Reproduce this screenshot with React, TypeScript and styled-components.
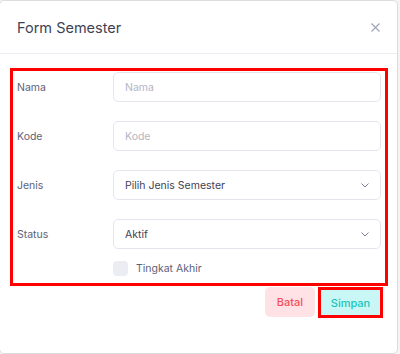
import React from 'react';
import styled, { createGlobalStyle } from 'styled-components';

const GlobalStyle = createGlobalStyle`
  html, body {
    margin: 0;
    padding: 0;
    background: #f4f4f4;
    font-family: Inter, 'Noto Sans', sans-serif;
  }
  * { box-sizing: border-box; }
`;

const Modal = styled.div`
  width: 399px;
  height: 354px;
  margin-left: -1px;
  background: #fff;
  border: 1px solid #dcdcdc;
  border-radius: 5px;
  display: flex;
  flex-direction: column;
`;

const Header = styled.div`
  height: 53px;
  flex-shrink: 0;
  display: flex;
  align-items: center;
  justify-content: space-between;
  padding: 0 16px 0 17px;
  border-bottom: 1px solid #ebedf3;
`;

const Title = styled.h3`
  margin: 0;
  font-size: 14.5px;
  font-weight: 400;
  color: #3f4254;
`;

const CloseButton = styled.button`
  border: none;
  background: none;
  padding: 0;
  width: 12px;
  height: 12px;
  display: flex;
  align-items: center;
  justify-content: center;
  cursor: pointer;
`;

const Body = styled.div`
  padding: 14px 9px 0 10px;
`;

const Highlight = styled.div`
  border: 3px solid #ff0000;
  padding: 1px 4px 7px 4px;
`;

const FieldRow = styled.div`
  display: grid;
  grid-template-columns: 96px 1fr;
  align-items: center;
  margin-bottom: 19px;
`;

const Label = styled.label`
  font-size: 10.5px;
  color: #5e6278;
`;

const Input = styled.input`
  height: 30px;
  width: 100%;
  border: 1px solid #e4e6ef;
  border-radius: 5px;
  padding: 0 11px;
  font-family: inherit;
  font-size: 10.5px;
  color: #3f4254;
  outline: none;
  &::placeholder {
    color: #b5b5c3;
  }
`;

const Select = styled.div`
  height: 30px;
  width: 100%;
  border: 1px solid #e4e6ef;
  border-radius: 5px;
  padding: 0 11px;
  display: flex;
  align-items: center;
  justify-content: space-between;
  font-size: 10.5px;
  color: #3f4254;
`;

const CheckRow = styled.div`
  display: grid;
  grid-template-columns: 96px 1fr;
  margin-top: -7px;
`;

const CheckLabel = styled.label`
  grid-column: 2;
  display: flex;
  align-items: center;
  gap: 8px;
  font-size: 10.5px;
  color: #5e6278;
`;

const CheckBox = styled.span`
  width: 15px;
  height: 15px;
  border-radius: 4px;
  background: #ebedf3;
`;

const Footer = styled.div`
  display: flex;
  justify-content: flex-end;
  gap: 3px;
  padding: 1px 5px 0 0;
`;

const Button = styled.button<{ $variant: 'danger' | 'success'; $marked?: boolean }>`
  height: ${(p) => (p.$marked ? '31px' : '30px')};
  width: ${(p) => (p.$marked ? '65px' : '50px')};
  padding: 0;
  border: ${(p) => (p.$marked ? '3px solid #ff0000' : 'none')};
  border-radius: ${(p) => (p.$marked ? '0' : '5px')};
  background: ${(p) => (p.$variant === 'danger' ? '#ffe2e5' : '#c9f7f5')};
  color: ${(p) => (p.$variant === 'danger' ? '#f64e60' : '#1bc5bd')};
  font-family: inherit;
  font-size: 11px;
  font-weight: 500;
  cursor: pointer;
`;

const Chevron = () => (
  <svg width="8" height="5" viewBox="0 0 8 5" fill="none">
    <path d="M0.8 0.8l3.2 3.2 3.2-3.2" stroke="#7e8299" strokeWidth="1" strokeLinecap="round" strokeLinejoin="round" />
  </svg>
);

const App = () => {
  return (
    <>
      <GlobalStyle />
      <Modal>
        <Header>
          <Title>Form Semester</Title>
          <CloseButton>
            <svg width="9" height="9" viewBox="0 0 9 9">
              <path d="M0.5 0.5l8 8M8.5 0.5l-8 8" stroke="#a1a5b7" strokeWidth="1.2" />
            </svg>
          </CloseButton>
        </Header>
        <Body>
          <Highlight>
            <FieldRow>
              <Label>Nama</Label>
              <Input placeholder="Nama" />
            </FieldRow>
            <FieldRow>
              <Label>Kode</Label>
              <Input placeholder="Kode" />
            </FieldRow>
            <FieldRow>
              <Label>Jenis</Label>
              <Select>
                Pilih Jenis Semester
                <Chevron />
              </Select>
            </FieldRow>
            <FieldRow>
              <Label>Status</Label>
              <Select>
                Aktif
                <Chevron />
              </Select>
            </FieldRow>
            <CheckRow>
              <CheckLabel>
                <CheckBox />
                Tingkat Akhir
              </CheckLabel>
            </CheckRow>
          </Highlight>
          <Footer>
            <Button $variant="danger">Batal</Button>
            <Button $variant="success" $marked>
              Simpan
            </Button>
          </Footer>
        </Body>
      </Modal>
    </>
  );
};

export default App;
